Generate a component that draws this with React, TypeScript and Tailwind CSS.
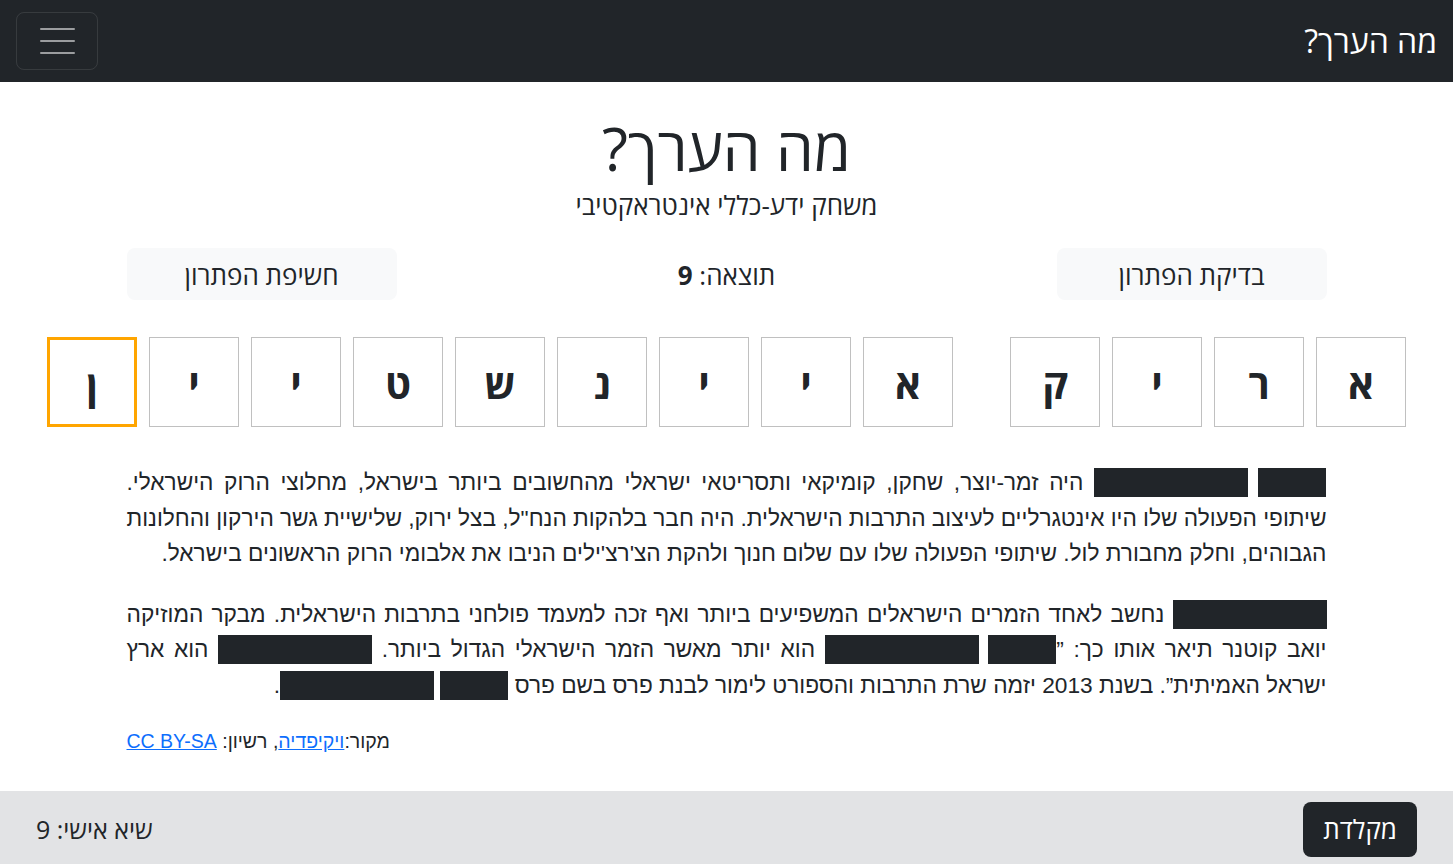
import React from 'react';

// Letters of the hidden answer, in reading order (rtl)
const firstWord = ['א', 'ר', 'י', 'ק'];
const secondWord = ['א', 'י', 'י', 'נ', 'ש', 'ט', 'י', 'י', 'ן'];

const Short = () => <span className="inline-block w-[68px] h-[29px] bg-[#212529] align-[-7px]" />;
const Long = () => <span className="inline-block w-[154px] h-[29px] bg-[#212529] align-[-7px]" />;

const LetterBox = ({ letter, active }: { letter: string; active?: boolean }) => (
  <div
    className={`w-[90px] h-[90px] flex items-center justify-center text-[40px] font-bold text-[#212529] pt-[3px] ${
      active ? 'border-[3px] border-[#ffa500]' : 'border border-[#c0c0c0]'
    }`}
  >
    {letter}
  </div>
);

export default function App() {
  return (
    <div dir="rtl" className="h-screen flex flex-col bg-white text-[#212529] font-['Open_Sans','DejaVu_Sans',sans-serif]">
      {/* Navbar */}
      <header className="h-[82px] shrink-0 bg-[#212529] flex items-center justify-between pr-4 pl-4">
        <span className="text-white text-[32px] leading-none">מה הערך?</span>
        <button className="w-[82px] h-[58px] rounded-lg border border-white/10 flex flex-col items-center justify-center gap-[10px]">
          <span className="block w-[35px] h-[2px] rounded-full bg-white/55" />
          <span className="block w-[35px] h-[2px] rounded-full bg-white/55" />
          <span className="block w-[35px] h-[2px] rounded-full bg-white/55" />
        </button>
      </header>

      <main className="flex-1 overflow-hidden">
        <h1 className="mt-[30px] text-center text-[60px] leading-[1.2]">מה הערך?</h1>
        <h2 className="mt-[6px] text-center text-[26px] leading-[1.2]">משחק ידע-כללי אינטראקטיבי</h2>

        <div className="mx-auto w-[1200px] mt-[27px] flex items-center justify-between">
          <button className="w-[270px] h-[52px] rounded-lg bg-[#f8f9fa] text-[26px] pt-[3px]">בדיקת הפתרון</button>
          <div className="text-[26px] pt-[3px]">
            תוצאה: <span className="font-bold">9</span>
          </div>
          <button className="w-[270px] h-[52px] rounded-lg bg-[#f8f9fa] text-[26px] pt-[3px]">חשיפת הפתרון</button>
        </div>

        <div className="mt-[37px] flex justify-center gap-3">
          {firstWord.map((l, i) => (
            <LetterBox key={'a' + i} letter={l} />
          ))}
          <div className="w-[33px]" />
          {secondWord.map((l, i) => (
            <LetterBox key={'b' + i} letter={l} active={i === secondWord.length - 1} />
          ))}
        </div>

        <div className="mx-auto w-[1200px] mt-[38px] font-['Liberation_Sans',Arial,sans-serif] text-[22.7px] leading-[35.5px] text-justify">
          <p>
            <span className="block [text-align-last:justify]">
              <Short /> <Long /> היה זמר-יוצר, שחקן, קומיקאי ותסריטאי ישראלי מהחשובים ביותר בישראל, מחלוצי הרוק הישראלי.
            </span>
            <span className="block whitespace-nowrap [text-align-last:justify] [word-spacing:-3px]">
              שיתופי הפעולה שלו היו אינטגרליים לעיצוב התרבות הישראלית. היה חבר בלהקות הנח"ל, בצל ירוק, שלישיית גשר הירקון והחלונות
            </span>
            <span className="block">
              הגבוהים, וחלק מחבורת לול. שיתופי הפעולה שלו עם שלום חנוך ולהקת הצ'רצ'ילים הניבו את אלבומי הרוק הראשונים בישראל.
            </span>
          </p>
          <p className="mt-[25px]">
            <Long /> נחשב לאחד הזמרים הישראלים המשפיעים ביותר ואף זכה למעמד פולחני בתרבות הישראלית. מבקר המוזיקה יואב
            קוטנר תיאר אותו כך: ”<Short /> <Long /> הוא יותר מאשר הזמר הישראלי הגדול ביותר. <Long /> הוא ארץ ישראל
            האמיתית”. בשנת 2013 יזמה שרת התרבות והספורט לימור לבנת פרס בשם פרס <Short /> <Long />.
          </p>
          <p className="mt-[24px] text-left text-[19.5px] leading-[28px]">
            <span dir="rtl">
              מקור:<a href="#" className="text-[#0d6efd] underline">ויקיפדיה</a>, רשיון:{' '}
              <a href="#" className="text-[#0d6efd] underline">CC BY-SA</a>
            </span>
          </p>
        </div>
      </main>

      {/* Footer */}
      <footer className="h-[73px] shrink-0 bg-[#e2e3e5] flex items-center justify-between px-9">
        <button className="h-[55px] px-5 rounded-lg bg-[#212529] text-white text-[26px] mt-[4px]">מקלדת</button>
        <span className="text-[25px] mt-[4px]">שיא אישי: 9</span>
      </footer>
    </div>
  );
}
